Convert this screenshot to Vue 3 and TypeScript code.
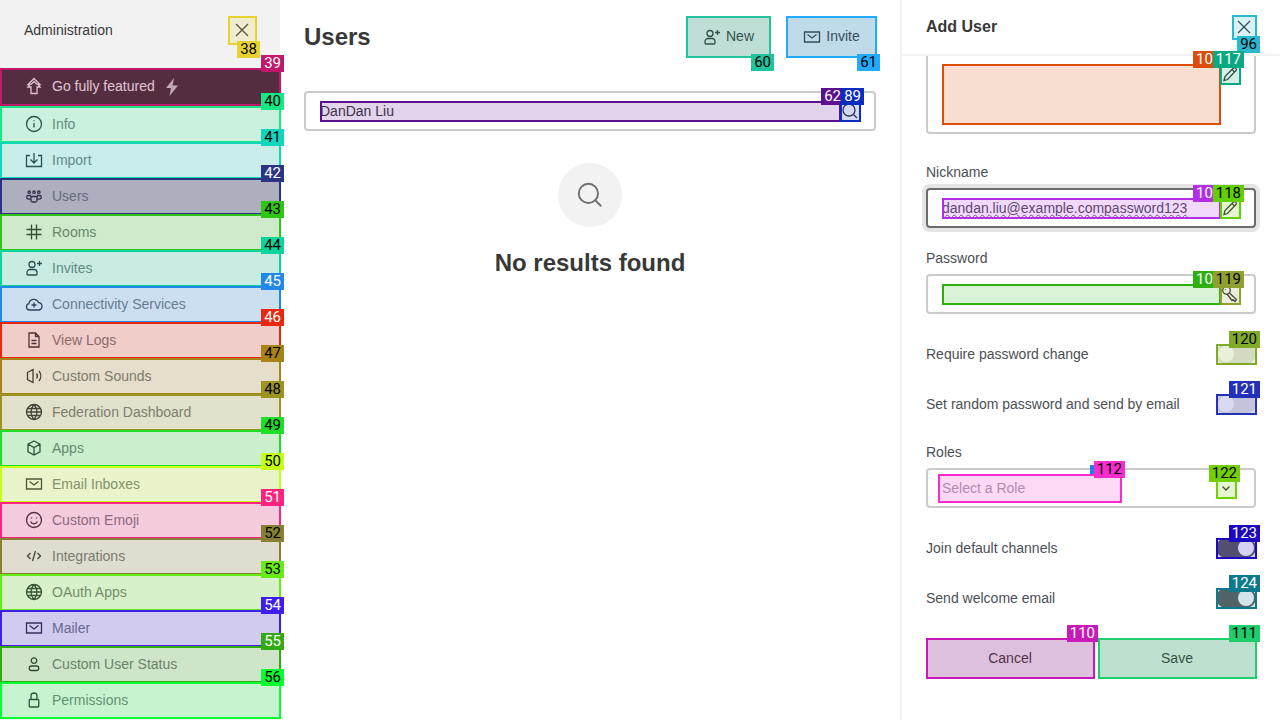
<script setup lang="ts">
const icons: Record<string, string> = {
  close: 'M4 4L16 16M16 4L4 16',
  stackUp: 'M10 2.5L16 8.5H14L16 11H13V17.5H7V11H4L6 8.5H4ZM6.8 8.5L10 5.5L13.2 8.5',
  bolt: 'M12 1L4 11H9L7.5 19L16 8.5H10.5Z',
  info: 'M10 2.5a7.5 7.5 0 1 0 0 15a7.5 7.5 0 1 0 0-15zM10 9v4.5M10 6.2v1',
  import: 'M6 5.5H2.5V16.5H17.5V5.5H14M10 3V12.5M6.5 9.5L10 13L13.5 9.5',
  team: 'M5.2 5a1.2 1.2 0 1 0 0 2.4a1.2 1.2 0 1 0 0-2.4zM10 5a1.2 1.2 0 1 0 0 2.4a1.2 1.2 0 1 0 0-2.4zM14.8 5a1.2 1.2 0 1 0 0 2.4a1.2 1.2 0 1 0 0-2.4zM7 10.5h6v4a1.5 1.5 0 0 1-1.5 1.5h-3a1.5 1.5 0 0 1-1.5-1.5zM7 9.5H4.5a1.8 1.8 0 0 0 0 3.6H7M13 9.5h2.5a1.8 1.8 0 0 1 0 3.6H13',
  hash: 'M7.5 2.5V17.5M12.5 2.5V17.5M2.5 7.5H17.5M2.5 12.5H17.5',
  userPlus: 'M8 3.5a3 3 0 1 0 0 6a3 3 0 1 0 0-6zM6 11.5h4a3 3 0 0 1 3 3v1.5a1 1 0 0 1-1 1H4a1 1 0 0 1-1-1v-1.5a3 3 0 0 1 3-3zM15.5 3V8M13 5.5H18',
  cloud: 'M5.5 16a3.2 3.2 0 0 1-.6-6.3A5 5 0 0 1 14.5 8.5a3.8 3.8 0 0 1 .5 7.5zM10 8.5v5M7.5 11h5',
  file: 'M5 3h6.5L15 6.5V17H5zM11.5 3V6.5H15M7.5 10.5h5M7.5 13.5h5',
  sound: 'M3.5 6.5L9 3.5V16.5L3.5 13.5zM12.5 7.5a4 4 0 0 1 0 5M15 5a8 8 0 0 1 0 10',
  globe: 'M10 2.5a7.5 7.5 0 1 0 0 15a7.5 7.5 0 1 0 0-15zM2.5 10h15M3.5 6.5h13M3.5 13.5h13M10 2.5c-4 4.5-4 10.5 0 15M10 2.5c4 4.5 4 10.5 0 15',
  cube: 'M10 3L16 6.2V13.8L10 17L4 13.8V6.2ZM4 6.2L10 9.5L16 6.2M10 9.5V17',
  mail: 'M2.5 5H17.5V15H2.5ZM5.5 7.5L10 11L14.5 7.5',
  emoji: 'M10 2.5a7.5 7.5 0 1 0 0 15a7.5 7.5 0 1 0 0-15zM6.5 11.5c1.5 3 5.5 3 7 0M7.5 7.5v1M12.5 7.5v1',
  code: 'M6.5 7L3.5 10L6.5 13M13.5 7L16.5 10L13.5 13M11.5 5L8.5 15',
  user: 'M10 3.8a2.8 2.8 0 1 0 0 5.6a2.8 2.8 0 1 0 0-5.6zM7.5 12h5a2.2 2.2 0 0 1 0 4.5h-5a2.2 2.2 0 0 1 0-4.5z',
  lock: 'M6.2 9.5h7.6a1 1 0 0 1 1 1v5.5a1 1 0 0 1-1 1H6.2a1 1 0 0 1-1-1v-5.5a1 1 0 0 1 1-1zM7 9.5V6a3 3 0 0 1 6 0v3.5',
  search: 'M9 3a6 6 0 1 0 0 12a6 6 0 1 0 0-12zM13.5 13.5L17 17',
  pencil: 'M4 16.5L5 12.5L13.5 4a1.5 1.5 0 0 1 2.1 0L16 4.4a1.5 1.5 0 0 1 0 2.1L7.5 15.5ZM12 5.5L14.5 8',
  key: 'M6.5 2.5a3.8 3.8 0 1 0 0 7.6a3.8 3.8 0 1 0 0-7.6zM9.2 8.7L16.5 15.5L15 17.5L13 15.7L12 16.5L10.5 14.5L7 10M5.5 5.2v.8',
  chevron: 'M6.5 8.5L10 12L13.5 8.5',
}

interface NavItem {
  id: number
  label: string
  icon: string
  color: string
  light?: boolean
}

const nav: NavItem[] = [
  { id: 40, label: 'Info', icon: 'info', color: '#15e884' },
  { id: 41, label: 'Import', icon: 'import', color: '#12d6bb' },
  { id: 42, label: 'Users', icon: 'team', color: '#2b3483', light: true },
  { id: 43, label: 'Rooms', icon: 'hash', color: '#2fc616' },
  { id: 44, label: 'Invites', icon: 'userPlus', color: '#0ad49b' },
  { id: 45, label: 'Connectivity Services', icon: 'cloud', color: '#2288e8', light: true },
  { id: 46, label: 'View Logs', icon: 'file', color: '#e8290f', light: true },
  { id: 47, label: 'Custom Sounds', icon: 'sound', color: '#a88418' },
  { id: 48, label: 'Federation Dashboard', icon: 'globe', color: '#9c9420' },
  { id: 49, label: 'Apps', icon: 'cube', color: '#1ede28' },
  { id: 50, label: 'Email Inboxes', icon: 'mail', color: '#c4ff14' },
  { id: 51, label: 'Custom Emoji', icon: 'emoji', color: '#ff2480', light: true },
  { id: 52, label: 'Integrations', icon: 'code', color: '#888033' },
  { id: 53, label: 'OAuth Apps', icon: 'globe', color: '#66ee14' },
  { id: 54, label: 'Mailer', icon: 'mail', color: '#3d1eeb', light: true },
  { id: 55, label: 'Custom User Status', icon: 'user', color: '#32aa10', light: true },
  { id: 56, label: 'Permissions', icon: 'lock', color: '#06ff30' },
]

const switches = [
  { label: 'Require password change', on: false, id: 120, color: '#80aa28' },
  { label: 'Set random password and send by email', on: false, id: 121, color: '#2530b8', light: true },
]

const switchesOn = [
  { label: 'Join default channels', on: true, id: 123, color: '#1c08c0', light: true },
  { label: 'Send welcome email', on: true, id: 124, color: '#0c7a8c', light: true },
]
</script>

<template>
  <div class="page">
    <aside class="sidebar">
      <div class="side-head">
        <span>Administration</span>
        <button class="close-side">
          <svg class="ico" viewBox="0 0 20 20"><path :d="icons.close" /></svg>
          <span class="mark below" style="--c: #e8d230"><b>38</b></span>
        </button>
      </div>
      <nav>
        <a class="nav-row upsell">
          <svg class="ico" viewBox="0 0 20 20"><path :d="icons.stackUp" /></svg>
          <span>Go fully featured</span>
          <svg class="ico bolt" viewBox="0 0 20 20"><path :d="icons.bolt" /></svg>
          <span class="mark light" style="--c: #c2186b"><b>39</b></span>
        </a>
        <a v-for="item in nav" :key="item.id" class="nav-row" :class="{ active: item.id === 42 }">
          <svg class="ico" viewBox="0 0 20 20"><path :d="icons[item.icon]" /></svg>
          <span>{{ item.label }}</span>
          <span class="mark" :class="{ light: item.light }" :style="{ '--c': item.color }"><b>{{ item.id }}</b></span>
        </a>
      </nav>
    </aside>

    <main class="main">
      <header class="main-head">
        <h1>Users</h1>
        <div class="main-actions">
          <button class="btn new">
            <svg class="ico" viewBox="0 0 20 20"><path :d="icons.userPlus" /></svg>
            <span class="btn-text">New</span>
            <span class="mark below" style="--c: #21c49c"><b>60</b></span>
          </button>
          <button class="btn invite">
            <svg class="ico" viewBox="0 0 20 20"><path :d="icons.mail" /></svg>
            <span class="btn-text">Invite</span>
            <span class="mark below" style="--c: #22aaff"><b>61</b></span>
          </button>
        </div>
      </header>

      <div class="box search">
        <div class="host grow">
          <span>DanDan Liu</span>
          <span class="mark light" style="--c: #5c1090"><b>62</b></span>
        </div>
        <div class="host">
          <svg class="ico" viewBox="0 0 20 20"><path :d="icons.search" /></svg>
          <span class="mark light" style="--c: #0c2cc0"><b>89</b></span>
        </div>
      </div>

      <div class="empty">
        <div class="empty-icon">
          <svg viewBox="0 0 20 20"><path :d="icons.search" /></svg>
        </div>
        <h2>No results found</h2>
      </div>
    </main>

    <section class="panel">
      <header class="panel-head">
        <h3>Add User</h3>
        <button class="close-panel">
          <svg class="ico" viewBox="0 0 20 20"><path :d="icons.close" /></svg>
          <span class="mark below" style="--c: #28b8d0"><b>96</b></span>
        </button>
      </header>

      <div class="form">
        <div class="field first">
          <div class="box">
            <div class="host grow tall">
              <span class="mark light cut" style="--c: #dd4c08"><b>10</b></span>
            </div>
            <div class="host">
              <svg class="ico" viewBox="0 0 20 20"><path :d="icons.pencil" /></svg>
              <span class="mark light" style="--c: #0ca882"><b>117</b></span>
            </div>
          </div>
        </div>

        <div class="field">
          <label>Nickname</label>
          <div class="box focused">
            <div class="host grow">
              <span class="misspelt">dandan.liu@example.compassword123</span>
              <span class="mark light cut" style="--c: #b42ee8"><b>10</b></span>
            </div>
            <div class="host">
              <svg class="ico" viewBox="0 0 20 20"><path :d="icons.pencil" /></svg>
              <span class="mark" style="--c: #60d000"><b>118</b></span>
            </div>
          </div>
        </div>

        <div class="field">
          <label>Password</label>
          <div class="box">
            <div class="host grow">
              <span class="mark light cut" style="--c: #2cb010"><b>10</b></span>
            </div>
            <div class="host">
              <svg class="ico" viewBox="0 0 20 20"><path :d="icons.key" /></svg>
              <span class="mark" style="--c: #90a030"><b>119</b></span>
            </div>
          </div>
        </div>

        <div v-for="s in switches" :key="s.id" class="switch-row">
          <span>{{ s.label }}</span>
          <div class="switch">
            <i></i>
            <span class="mark" :class="{ light: s.light }" :style="{ '--c': s.color }"><b>{{ s.id }}</b></span>
          </div>
        </div>

        <div class="field roles">
          <label>Roles</label>
          <div class="box select">
            <div class="host placeholder">
              <span>Select a Role</span>
              <i class="sliver"></i>
              <span class="mark" style="--c: #f82ccc"><b>112</b></span>
            </div>
            <div class="host">
              <svg class="ico" viewBox="0 0 20 20"><path :d="icons.chevron" /></svg>
              <span class="mark" style="--c: #70d000"><b>122</b></span>
            </div>
          </div>
        </div>

        <div v-for="s in switchesOn" :key="s.id" class="switch-row">
          <span>{{ s.label }}</span>
          <div class="switch on">
            <i></i>
            <span class="mark light" :style="{ '--c': s.color }"><b>{{ s.id }}</b></span>
          </div>
        </div>

        <div class="form-actions">
          <button class="btn">
            <span>Cancel</span>
            <span class="mark light" style="--c: #c81ab8"><b>110</b></span>
          </button>
          <button class="btn">
            <span>Save</span>
            <span class="mark" style="--c: #1ece6c"><b>111</b></span>
          </button>
        </div>
      </div>
    </section>
  </div>
</template>

<style scoped>
.page {
  display: flex;
  width: 1280px;
  height: 720px;
  overflow: hidden;
  font-family: "Liberation Sans", Arial, sans-serif;
  font-size: 14px;
  color: #383838;
  background: #fff;
}

.mark {
  position: absolute;
  inset: 0 -1px -1px 0;
  box-sizing: border-box;
  border: 2px solid var(--c);
  background: color-mix(in srgb, var(--c) 18%, transparent);
  pointer-events: none;
}

.mark b {
  position: absolute;
  top: -15px;
  right: -5px;
  padding: 0 3px;
  background: var(--c);
  color: #000;
  font-family: Roboto, "Liberation Sans", sans-serif;
  font-weight: 400;
  font-size: 15px;
  line-height: 17px;
  white-space: nowrap;
}

.mark.light b {
  color: #fff;
}

.mark.below b {
  top: auto;
  bottom: -15px;
}

/* label whose end sits under the next field's label */
.mark.cut b {
  width: 25px;
}

.ico {
  flex: none;
  width: 20px;
  height: 20px;
  fill: none;
  stroke: currentColor;
  stroke-width: 1.3;
}

button {
  position: relative;
  display: flex;
  align-items: center;
  justify-content: center;
  padding: 0;
  border: 0;
  background: none;
  font: inherit;
  color: inherit;
}

/* sidebar */
.sidebar {
  flex: none;
  width: 280px;
  background: #f2f2f2;
}

.side-head {
  display: flex;
  align-items: center;
  justify-content: space-between;
  height: 60px;
  padding: 0 24px;
  margin-bottom: 8px;
  box-sizing: border-box;
}

.close-side {
  width: 28px;
  height: 28px;
}

.nav-row {
  position: relative;
  display: flex;
  align-items: center;
  gap: 8px;
  height: 36px;
  padding-left: 24px;
  color: #75797f;
}

.nav-row .ico {
  color: #2f343d;
}

.nav-row.active {
  background: #cbcbcb;
}

.nav-row.upsell {
  height: 38px;
  padding-bottom: 2px;
  box-sizing: border-box;
  background: #3c3339;
  color: #e8e8e8;
}

.nav-row.upsell .mark {
  bottom: 0;
}

.nav-row.upsell .ico {
  color: #e8e8e8;
}

.nav-row.upsell .bolt {
  margin: 2px 0 0 -1px;
  fill: #c4c8cc;
  stroke: none;
}

/* main column */
.main {
  flex: 1;
  padding: 16px 24px 0;
}

.main-head {
  display: flex;
  align-items: center;
  justify-content: space-between;
}

.main-head h1 {
  margin: 1px 0 0;
  font-size: 24px;
  line-height: 32px;
  font-weight: 700;
}

.main-actions {
  display: flex;
  gap: 16px;
}

.btn {
  height: 41px;
  gap: 4px;
  background: #e2e5e4;
}

.btn-text {
  margin-top: -2px;
}

.btn.new {
  width: 84px;
}

.btn.invite {
  width: 90px;
}

.box {
  display: flex;
  align-items: flex-start;
  padding: 8px 14px;
  border: 2px solid #cbcbcb;
  border-radius: 4px;
}

.host {
  position: relative;
  display: flex;
  align-items: center;
  flex: none;
  min-height: 20px;
  line-height: 20px;
}

.host.grow {
  flex: 1;
}

.host.tall {
  height: 60px;
}

.search {
  margin-top: 34px;
}

.empty {
  display: flex;
  flex-direction: column;
  align-items: center;
  gap: 20px;
  margin-top: 32px;
}

.empty-icon {
  display: flex;
  align-items: center;
  justify-content: center;
  width: 64px;
  height: 64px;
  border-radius: 50%;
  background: #f2f2f2;
}

.empty-icon svg {
  width: 32px;
  height: 32px;
  fill: none;
  stroke: #6f6f6f;
  stroke-width: 1.2;
}

.empty h2 {
  margin: 0;
  font-size: 24px;
  line-height: 32px;
  font-weight: 700;
}

/* add user panel */
.panel {
  display: flex;
  flex-direction: column;
  flex: none;
  box-sizing: border-box;
  width: 380px;
  border-left: 2px solid #f2f2f2;
  overflow: hidden;
}

.panel-head {
  display: flex;
  align-items: center;
  justify-content: space-between;
  flex: none;
  height: 54px;
  padding: 0 24px;
  border-bottom: 2px solid #f2f2f2;
}

.panel-head h3 {
  margin: 0;
  font-size: 16px;
  font-weight: 700;
}

.close-panel {
  width: 24px;
  height: 24px;
}

.form {
  display: flex;
  flex-direction: column;
  padding: 0 24px;
}

.field {
  margin-top: 20px;
}

/* scrolled under the header, its top edge is out of view */
.field.first {
  margin-top: 0;
  margin-bottom: 8px;
}

.field.first .box {
  border-top: 0;
  border-radius: 0 0 4px 4px;
}

.field.roles {
  margin-top: 28px;
}

.field label {
  display: block;
  margin-bottom: 6px;
  line-height: 20px;
  color: #4c4f55;
}

.box.focused {
  border-color: #6c6c6c;
  box-shadow: 0 0 0 4px #e4e4e4;
}

.misspelt {
  white-space: nowrap;
  color: #4c4f55;
  text-decoration: underline wavy #6a5a70 1px;
  text-underline-offset: 1px;
}

.select {
  position: relative;
  align-items: center;
  justify-content: space-between;
  padding: 4px 18px 4px 10px;
}

.host.placeholder {
  width: 183px;
  height: 28px;
  padding-left: 4px;
  box-sizing: border-box;
  color: #9ea2a8;
}

.sliver {
  position: absolute;
  top: -9px;
  right: 27px;
  width: 4px;
  height: 9px;
  background: #2080e8;
}

.switch-row {
  display: flex;
  align-items: center;
  justify-content: space-between;
  margin-top: 30px;
  height: 20px;
  color: #4c4f55;
}

.switch {
  position: relative;
  display: flex;
  align-items: center;
  box-sizing: border-box;
  width: 40px;
  height: 20px;
  padding: 2px;
  border-radius: 10px;
  background: #e6e4e4;
}

.switch i {
  width: 16px;
  height: 16px;
  border-radius: 50%;
  background: #fff;
}

.switch.on {
  justify-content: flex-end;
  background: #606060;
}

.form-actions {
  display: grid;
  grid-template-columns: 168px 1fr;
  gap: 4px;
  margin-top: 30px;
}

.form-actions .btn {
  height: 40px;
}
</style>
